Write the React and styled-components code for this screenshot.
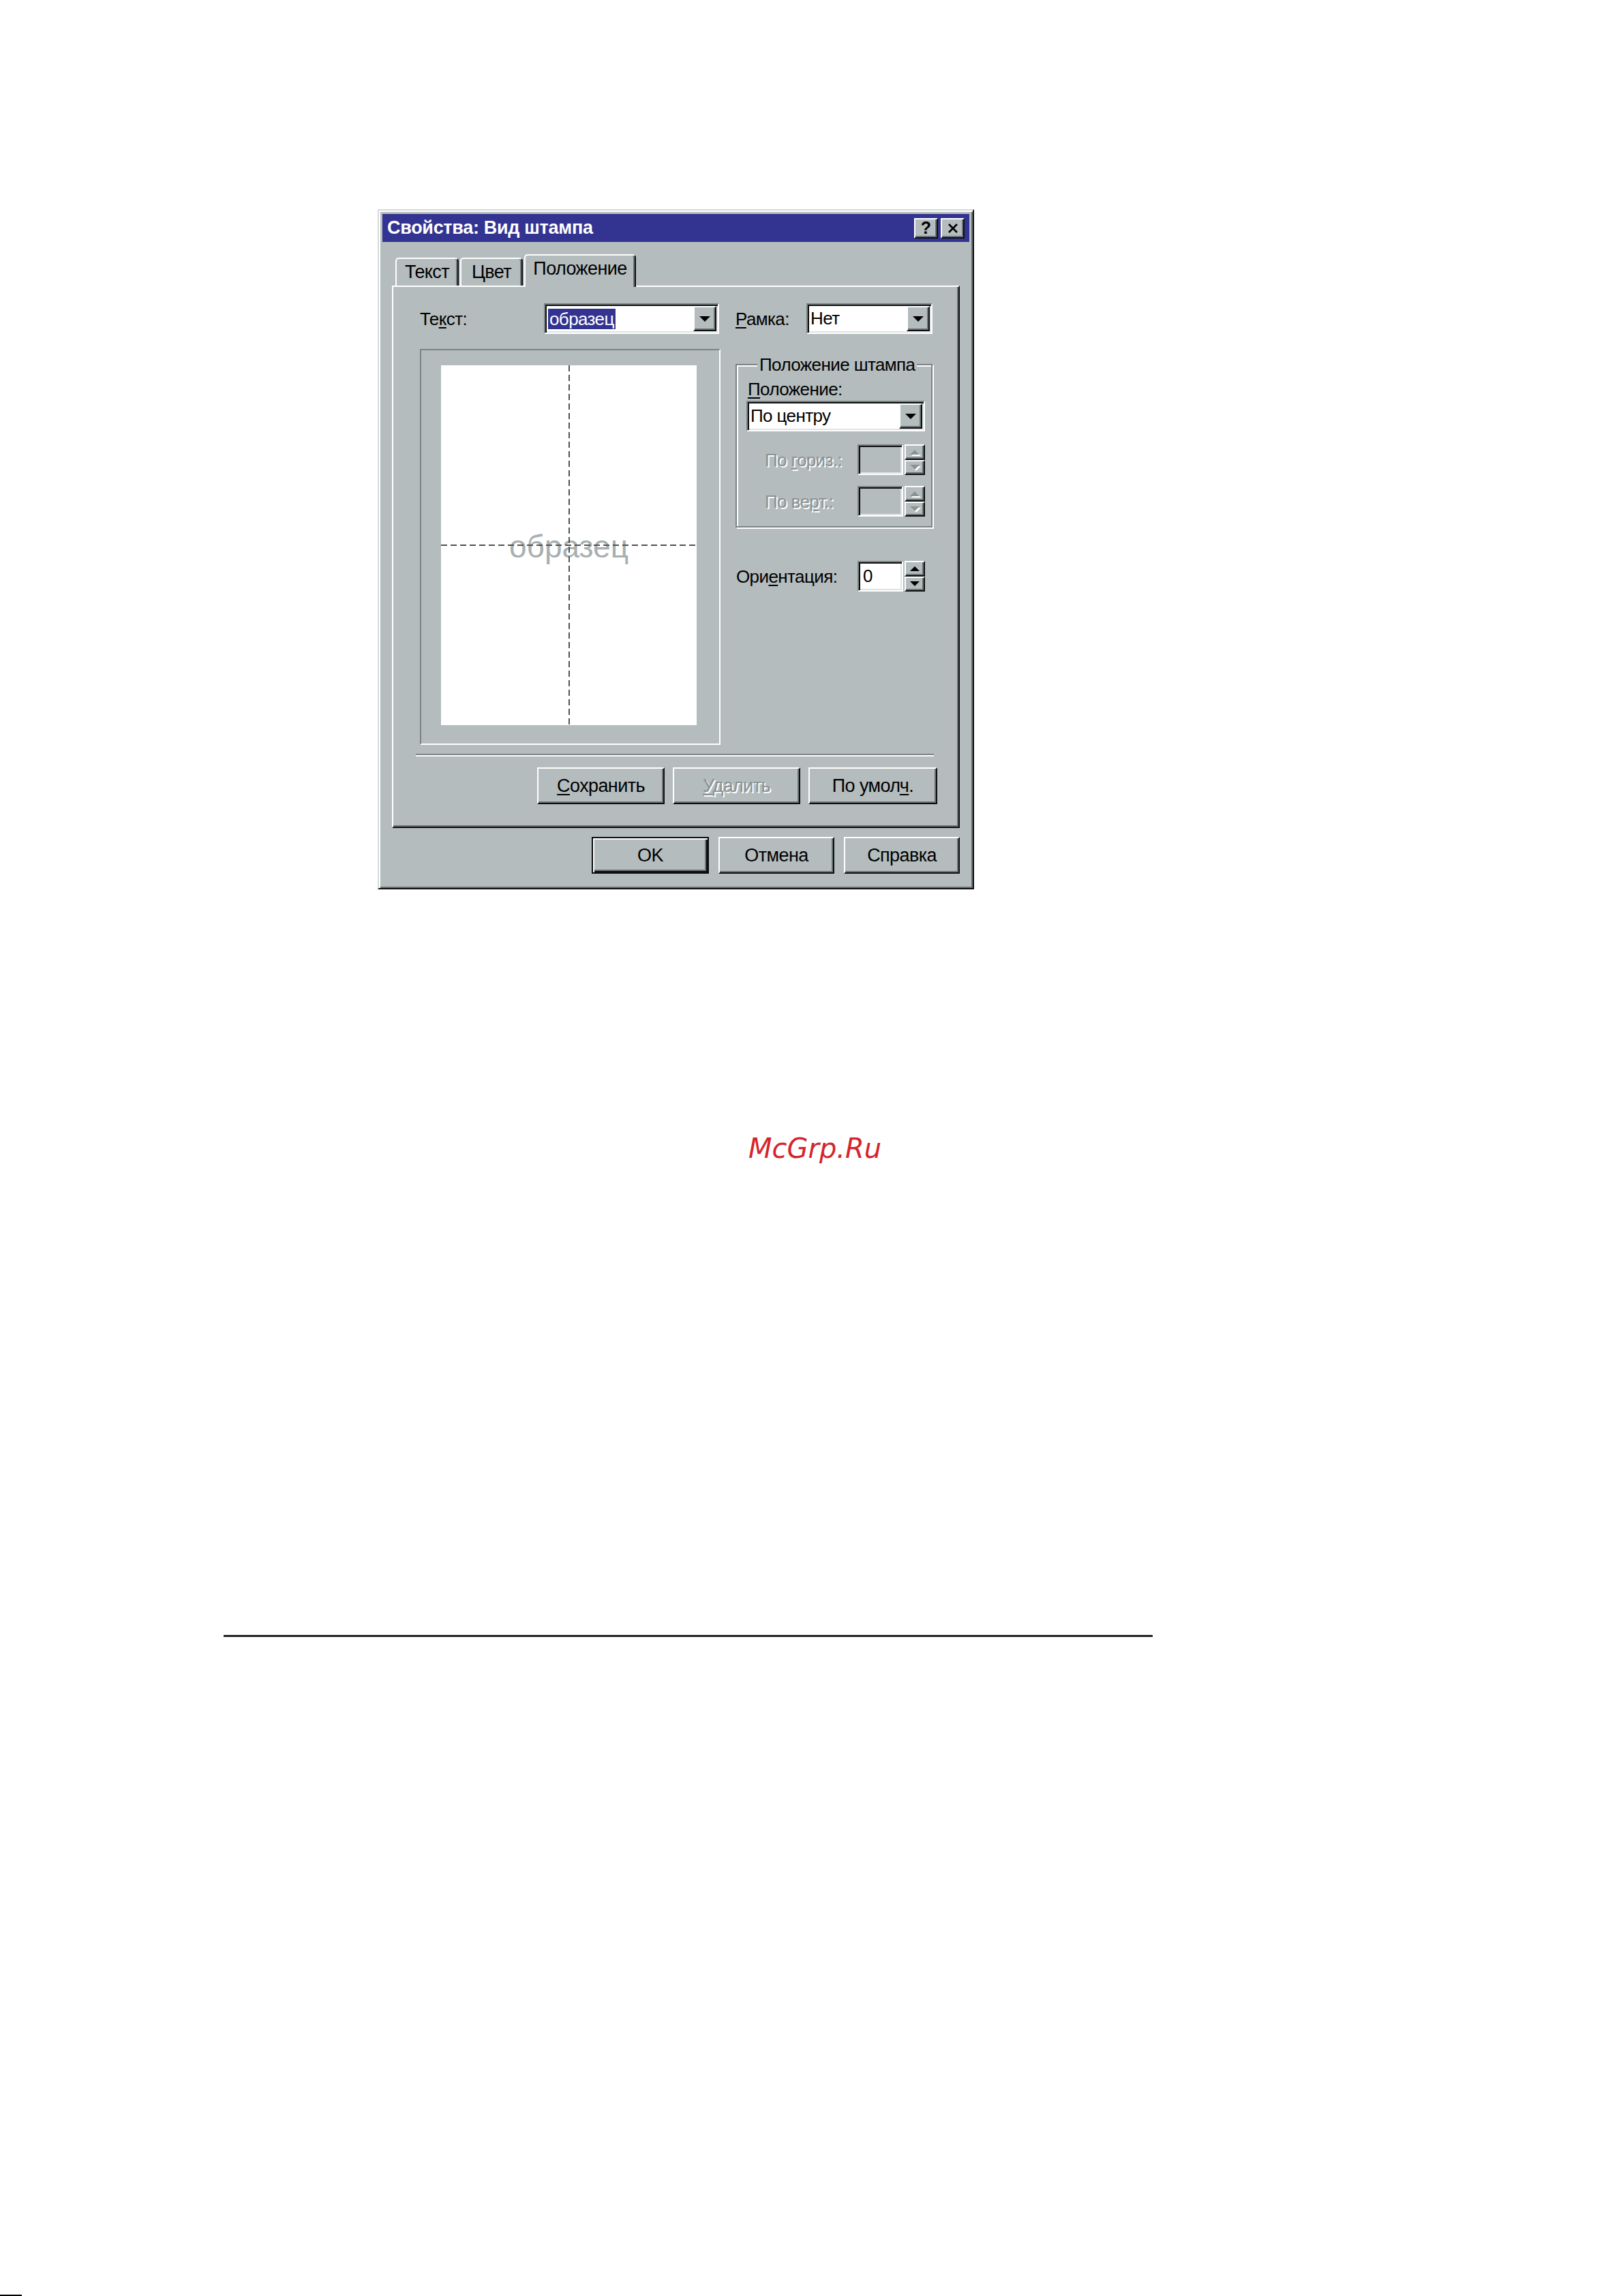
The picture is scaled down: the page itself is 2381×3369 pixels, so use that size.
import React from 'react';
import styled, { createGlobalStyle, css } from 'styled-components';

// classic 3D palette
const face = '#b4bcbd';
const shade = '#6c7575';
const etch = '#7b8484';
const hilite = '#ffffff';
const black = '#0d0d0d';
const navy = '#333391';
const grayText = '#8a9393';

const uiFont = `"Liberation Sans", Arial, sans-serif`;

const GlobalStyle = createGlobalStyle`
  html, body {
    margin: 0;
    padding: 0;
    background: #fff;
  }
  body {
    font-family: ${uiFont};
  }
`;

// dialog text is set a little tight, like the old bitmap system font
const uiText = css`
  font-family: ${uiFont};
  font-size: 26px;
  letter-spacing: -0.6px;
  color: #000;
`;

const raised = css`
  border: 2px solid;
  border-color: ${hilite} ${black} ${black} ${hilite};
  box-shadow: inset -2px -2px 0 ${shade};
`;

const sunken = css`
  border: 2px solid;
  border-color: ${etch} ${hilite} ${hilite} ${etch};
  box-shadow: inset 2px 2px 0 ${black}, inset -2px -2px 0 #dfe3e3;
`;

const disabledText = css`
  color: ${grayText};
  text-shadow: 2px 2px 0 ${hilite};
`;

const Page = styled.div`
  width: 2381px;
  height: 3369px;
  display: flex;
  flex-direction: column;
  overflow: hidden;
  background: #fff;
`;

const Dialog = styled.div`
  box-sizing: border-box;
  width: 875px;
  height: 998px;
  margin: 307px 0 0 554px;
  padding: 5px;
  display: flex;
  flex-direction: column;
  background: ${face};
  border: 2px solid;
  border-color: #d6dada ${black} ${black} #d6dada;
  box-shadow: inset 2px 2px 0 ${hilite}, inset -2px -2px 0 ${shade};
`;

const TitleBar = styled.div`
  height: 41px;
  display: flex;
  align-items: center;
  gap: 4px;
  padding: 0 7px;
  background: ${navy};
`;

const Title = styled.div`
  flex: 1;
  color: #fff;
  font-family: ${uiFont};
  font-weight: bold;
  font-size: 27px;
  letter-spacing: -0.3px;
  white-space: nowrap;
`;

const CaptionButton = styled.div`
  box-sizing: border-box;
  width: 35px;
  height: 30px;
  display: flex;
  align-items: center;
  justify-content: center;
  background: ${face};
  ${raised};
  color: #000;
  font-family: ${uiFont};
  font-weight: bold;
  font-size: 25px;
`;

const Body = styled.div`
  flex: 1;
  display: flex;
  flex-direction: column;
  padding: 18px 14px 0;
`;

const TabStrip = styled.div`
  display: flex;
  align-items: flex-end;
  padding-left: 5px;
  gap: 2px;
`;

const Tab = styled.div`
  box-sizing: border-box;
  position: relative;
  width: ${(p) => p.$w}px;
  height: ${(p) => (p.$active ? 48 : 41)}px;
  margin-bottom: ${(p) => (p.$active ? -2 : 0)}px;
  z-index: ${(p) => (p.$active ? 1 : 0)};
  display: flex;
  align-items: center;
  justify-content: center;
  padding-bottom: ${(p) => (p.$active ? 8 : 0)}px;
  background: ${face};
  border: 2px solid;
  border-bottom: none;
  border-color: ${hilite} ${black} transparent ${hilite};
  border-radius: 5px 5px 0 0;
  box-shadow: inset -2px 0 0 ${shade};
  ${uiText};
  font-size: 27px;
`;

const Panel = styled.div`
  box-sizing: border-box;
  height: 796px;
  padding: 24px 0 0 39px;
  border: 2px solid;
  border-color: ${hilite} ${black} ${black} ${hilite};
  box-shadow: inset -2px -2px 0 ${shade};
`;

const Columns = styled.div`
  display: grid;
  grid-template-columns: 441px 289px;
  column-gap: 22px;
  row-gap: 22px;
`;

const FieldRow = styled.div`
  display: flex;
  align-items: center;
  height: 45px;
`;

const Label = styled.div`
  width: ${(p) => (p.$w ? `${p.$w}px` : 'auto')};
  flex: ${(p) => (p.$w ? 'none' : 1)};
  padding-left: ${(p) => p.$indent || 0}px;
  ${uiText};
  line-height: 30px;
  white-space: nowrap;
  ${(p) => p.$disabled && disabledText};
`;

const Key = styled.span`
  text-decoration: underline;
  text-decoration-thickness: 2px;
  text-underline-offset: 3px;
`;

const Combo = styled.div`
  box-sizing: border-box;
  width: ${(p) => p.$w}px;
  height: 45px;
  display: flex;
  align-items: stretch;
  background: #fff;
  padding: 2px 2px 2px 4px;
  ${sunken};
`;

const ComboValue = styled.div`
  flex: 1;
  display: flex;
  align-items: center;
  ${uiText};
`;

const Selected = styled.span`
  background: ${navy};
  color: #fff;
  padding: 0 2px;
  line-height: 30px;
`;

const DropButton = styled.div`
  box-sizing: border-box;
  width: 34px;
  display: flex;
  align-items: center;
  justify-content: center;
  background: ${face};
  ${raised};
  &::after {
    content: '';
    border-left: 8px solid transparent;
    border-right: 8px solid transparent;
    border-top: 8px solid #000;
  }
`;

const Preview = styled.div`
  box-sizing: border-box;
  height: 581px;
  padding: 22px 33px 27px 29px;
  border: 2px solid;
  border-color: ${etch} ${hilite} ${hilite} ${etch};
`;

const Sheet = styled.div`
  position: relative;
  height: 100%;
  background: #fff;
  display: flex;
  align-items: center;
  justify-content: center;
  &::before,
  &::after {
    content: '';
    position: absolute;
  }
  &::before {
    left: calc(50% - 1px);
    top: 0;
    bottom: 0;
    width: 2px;
    background: repeating-linear-gradient(to bottom, #4c5354 0 9px, transparent 9px 14px);
  }
  &::after {
    top: calc(50% - 1px);
    left: 0;
    right: 0;
    height: 2px;
    background: repeating-linear-gradient(to right, #4c5354 0 9px, transparent 9px 14px);
  }
`;

const Stamp = styled.span`
  margin-top: 4px;
  font-family: ${uiFont};
  font-size: 46px;
  line-height: 46px;
  color: #a7afb0;
`;

const SideColumn = styled.div`
  display: flex;
  flex-direction: column;
`;

const GroupBox = styled.fieldset`
  box-sizing: border-box;
  margin: 8px 0 0;
  padding: 0 9px 14px 14px;
  min-width: 0;
  border: 2px solid ${etch};
  box-shadow: inset 2px 2px 0 ${hilite}, 2px 2px 0 ${hilite};
`;

const Legend = styled.legend`
  margin-left: 16px;
  padding: 0 3px;
  background: ${face};
  ${uiText};
  line-height: 30px;
  white-space: nowrap;
`;

const GroupLabel = styled.div`
  margin: 6px 0 2px 2px;
  ${uiText};
  line-height: 30px;
`;

const SpinRow = styled.div`
  display: flex;
  align-items: center;
  margin-top: ${(p) => p.$top || 0}px;
  margin-right: ${(p) => p.$right || 0}px;
`;

const Spin = styled.div`
  display: flex;
  gap: 2px;
  height: 45px;
`;

const SpinEdit = styled.div`
  box-sizing: border-box;
  width: 67px;
  display: flex;
  align-items: center;
  padding-left: 6px;
  background: ${(p) => (p.$disabled ? face : '#fff')};
  ${uiText};
  ${sunken};
`;

const SpinButtons = styled.div`
  width: 30px;
  display: flex;
  flex-direction: column;
`;

const SpinArrow = styled.div`
  box-sizing: border-box;
  flex: 1;
  display: flex;
  align-items: center;
  justify-content: center;
  background: ${face};
  ${raised};
  &::after {
    content: '';
    border-left: 7px solid transparent;
    border-right: 7px solid transparent;
    ${(p) => (p.$up ? 'border-bottom' : 'border-top')}: 7px solid ${(p) => (p.$disabled ? grayText : '#000')};
    filter: ${(p) => (p.$disabled ? `drop-shadow(2px 2px 0 ${hilite})` : 'none')};
  }
`;

const Separator = styled.div`
  width: 760px;
  height: 2px;
  margin: 13px 0 0 -6px;
  background: ${etch};
  border-bottom: 2px solid ${hilite};
`;

const ButtonRow = styled.div`
  display: flex;
  justify-content: flex-end;
  gap: ${(p) => p.$gap || 12}px;
  margin-top: ${(p) => p.$top}px;
  padding-right: ${(p) => p.$right || 0}px;
`;

const Button = styled.div`
  box-sizing: border-box;
  width: ${(p) => p.$w}px;
  height: 54px;
  display: flex;
  align-items: center;
  justify-content: center;
  background: ${face};
  ${uiText};
  font-size: 27px;
  ${(p) =>
    p.$default
      ? css`
          border: 2px solid ${black};
          box-shadow: inset 2px 2px 0 ${hilite}, inset -2px -2px 0 ${black}, inset -4px -4px 0 ${shade};
        `
      : raised};
  ${(p) => p.$disabled && disabledText};
`;

const Watermark = styled.div`
  margin: 360px 0 0 1098px;
  font-family: "DejaVu Sans", sans-serif;
  font-style: italic;
  font-size: 40px;
  line-height: 40px;
  color: #d5242b;
`;

const Rule = styled.div`
  width: 1363px;
  height: 3px;
  margin: 694px 0 0 328px;
  background: #231f20;
`;

const EdgeMark = styled.div`
  width: 32px;
  height: 2px;
  margin-top: auto;
  background: #000;
`;

const CloseGlyph = () => (
  <svg width="16" height="16" viewBox="0 0 16 16">
    <path d="M2 2 L14 14 M14 2 L2 14" stroke="#000" strokeWidth="2.6" />
  </svg>
);

const ComboBox = ({ width, children }) => (
  <Combo $w={width}>
    <ComboValue>{children}</ComboValue>
    <DropButton />
  </Combo>
);

const SpinBox = ({ value, disabled }) => (
  <Spin>
    <SpinEdit $disabled={disabled}>{value}</SpinEdit>
    <SpinButtons>
      <SpinArrow $up $disabled={disabled} />
      <SpinArrow $disabled={disabled} />
    </SpinButtons>
  </Spin>
);

export default function App() {
  return (
    <Page>
      <GlobalStyle />
      <Dialog>
        <TitleBar>
          <Title>Свойства: Вид штампа</Title>
          <CaptionButton>?</CaptionButton>
          <CaptionButton>
            <CloseGlyph />
          </CaptionButton>
        </TitleBar>

        <Body>
          <TabStrip>
            <Tab $w={93}>Текст</Tab>
            <Tab $w={92}>Цвет</Tab>
            <Tab $w={164} $active>
              Положение
            </Tab>
          </TabStrip>

          <Panel>
            <Columns>
              <FieldRow>
                <Label $w={182}>
                  Те<Key>к</Key>ст:
                </Label>
                <ComboBox width={257}>
                  <Selected>образец</Selected>
                </ComboBox>
              </FieldRow>
              <FieldRow>
                <Label $w={104}>
                  <Key>Р</Key>амка:
                </Label>
                <ComboBox width={185}>Нет</ComboBox>
              </FieldRow>

              <Preview>
                <Sheet>
                  <Stamp>образец</Stamp>
                </Sheet>
              </Preview>

              <SideColumn>
                <GroupBox>
                  <Legend>Положение штампа</Legend>
                  <GroupLabel>
                    <Key>П</Key>оложение:
                  </GroupLabel>
                  <ComboBox width={262}>По центру</ComboBox>
                  <SpinRow $top={19}>
                    <Label $indent={27} $disabled>
                      По <Key>г</Key>ориз.:
                    </Label>
                    <SpinBox disabled />
                  </SpinRow>
                  <SpinRow $top={16}>
                    <Label $indent={27} $disabled>
                      По ве<Key>р</Key>т.:
                    </Label>
                    <SpinBox disabled />
                  </SpinRow>
                </GroupBox>

                <SpinRow $top={49} $right={11}>
                  <Label $indent={1}>
                    Ори<Key>е</Key>нтация:
                  </Label>
                  <SpinBox value="0" />
                </SpinRow>
              </SideColumn>
            </Columns>

            <Separator />

            <ButtonRow $top={16} $right={31}>
              <Button $w={187}>
                <span>
                  <Key>С</Key>охранить
                </span>
              </Button>
              <Button $w={187} $disabled>
                <span>
                  <Key>У</Key>далить
                </span>
              </Button>
              <Button $w={189}>
                <span>
                  По умол<Key>ч</Key>.
                </span>
              </Button>
            </ButtonRow>
          </Panel>

          <ButtonRow $top={13} $gap={14}>
            <Button $w={172} $default>
              OK
            </Button>
            <Button $w={170}>Отмена</Button>
            <Button $w={170}>Справка</Button>
          </ButtonRow>
        </Body>
      </Dialog>

      <Watermark>McGrp.Ru</Watermark>
      <Rule />
      <EdgeMark />
    </Page>
  );
}
